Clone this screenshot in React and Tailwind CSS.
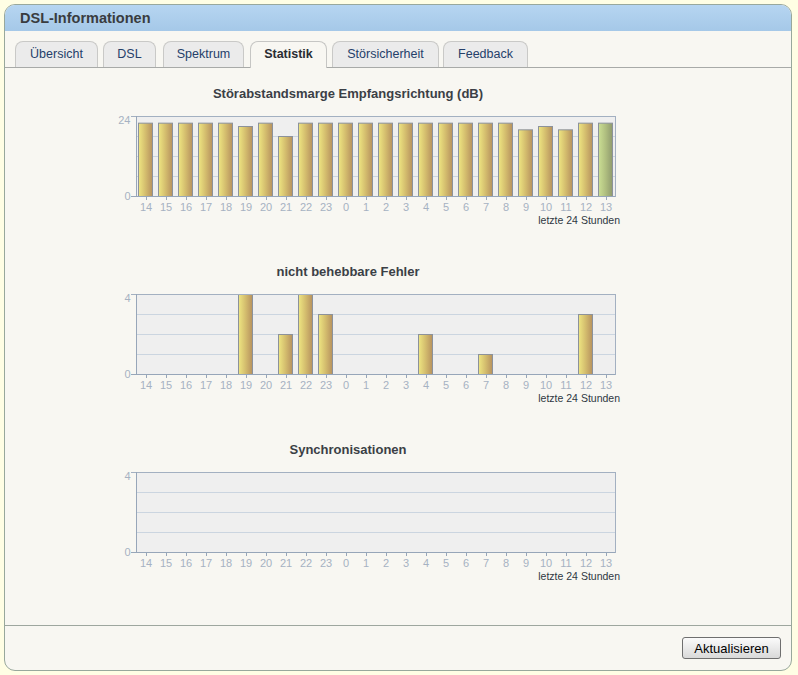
import React from "react";

const HOURS = [14, 15, 16, 17, 18, 19, 20, 21, 22, 23, 0, 1, 2, 3, 4, 5, 6, 7, 8, 9, 10, 11, 12, 13];

const TABS = [
  { label: "Übersicht", w: "w-[83px]", ml: "ml-[10px]" },
  { label: "DSL", w: "w-[53px]", ml: "ml-[5px]" },
  { label: "Spektrum", w: "w-[81px]", ml: "ml-[7px]" },
  { label: "Statistik", w: "w-[77px]", ml: "ml-[6px]", active: true },
  { label: "Störsicherheit", w: "w-[107px]", ml: "ml-[5px]" },
  { label: "Feedback", w: "w-[85px]", ml: "ml-[4px]" },
];

const FONT = "'Liberation Sans', Arial, sans-serif";

function Chart({ id, title, max, values, lastGreen }) {
  const axis = "#a3b0c1";
  const grid = "#cbd5e0";
  const label = "#a6b2c2";
  return (
    <div className="w-[540px]">
      <div className="w-[536px] h-[16px] leading-[16px] text-center text-[13px] font-bold text-[#3b3f46]">
        {title}
      </div>
      <svg width="540" height="102" className="block mt-[10px]" style={{ fontFamily: FONT }}>
        <defs>
          <linearGradient id={`y-${id}`} x1="0" x2="1" y1="0" y2="0">
            <stop offset="0" stopColor="#eee682" />
            <stop offset="0.5" stopColor="#d4bd6e" />
            <stop offset="1" stopColor="#b6915e" />
          </linearGradient>
          <linearGradient id={`g-${id}`} x1="0" x2="1" y1="0" y2="0">
            <stop offset="0" stopColor="#cbdf94" />
            <stop offset="0.5" stopColor="#b0bf80" />
            <stop offset="1" stopColor="#8f9a6e" />
          </linearGradient>
        </defs>
        <rect x="56" y="4" width="480" height="80" fill="#efefef" />
        {[1, 2, 3].map((k) => (
          <line key={k} x1="56" x2="536" y1={4 + 20 * k + 0.5} y2={4 + 20 * k + 0.5} stroke={grid} strokeWidth="1" />
        ))}
        {values.map((v, i) => {
          if (!v) return null;
          const top = 4 + 80 * (1 - v / max);
          const green = lastGreen && i === values.length - 1;
          return (
            <rect
              key={i}
              x={58.5 + 20 * i}
              y={top + 0.5}
              width="14"
              height={84 - top}
              fill={`url(#${green ? "g" : "y"}-${id})`}
              stroke="#8c929b"
              strokeWidth="1"
            />
          );
        })}
        <line x1="51" x2="536" y1="4.5" y2="4.5" stroke={axis} strokeWidth="1" />
        <line x1="51" x2="536" y1="84.5" y2="84.5" stroke="#97a6b9" strokeWidth="1" />
        <line x1="56.5" x2="56.5" y1="4" y2="85" stroke="#97a6b9" strokeWidth="1" />
        <line x1="535.5" x2="535.5" y1="4" y2="85" stroke={axis} strokeWidth="1" />
        {HOURS.map((h, i) => (
          <line key={`t${i}`} x1={66.5 + 20 * i} x2={66.5 + 20 * i} y1="85" y2="88" stroke="#97a6b9" strokeWidth="1" />
        ))}
        <text x="50.5" y="11.5" textAnchor="end" fontSize="11" fill={label}>{max}</text>
        <text x="50.5" y="87.5" textAnchor="end" fontSize="11" fill={label}>0</text>
        {HOURS.map((h, i) => (
          <text key={`l${i}`} x={66 + 20 * i} y="99" textAnchor="middle" fontSize="11" fill={label}>
            {h}
          </text>
        ))}
      </svg>
      <div className="w-[540px] h-[12px] leading-[12px] text-right text-[10.5px] text-[#2f3742]">
        letzte 24 Stunden
      </div>
    </div>
  );
}

export default function App() {
  const snr = [22, 22, 22, 22, 22, 21, 22, 18, 22, 22, 22, 22, 22, 22, 22, 22, 22, 22, 22, 20, 21, 20, 22, 22];
  const fehler = [0, 0, 0, 0, 0, 4, 0, 2, 4, 3, 0, 0, 0, 0, 2, 0, 0, 1, 0, 0, 0, 0, 3, 0];
  const sync = new Array(24).fill(0);

  return (
    <div className="w-[798px] h-[675px] bg-[#fffee4] pt-[4px] pl-[4px]" style={{ fontFamily: FONT }}>
      <div className="w-[788px] h-[667px] flex flex-col border border-[#98a89c] rounded-[11px] overflow-hidden bg-[#f8f7f2]">
        <div className="h-[26px] shrink-0 bg-gradient-to-b from-[#b6d5f1] to-[#a5c8e8] flex items-center pl-[15px]">
          <span className="text-[14.5px] font-bold text-[#393c40] leading-none">DSL-Informationen</span>
        </div>
        <div className="h-[37px] shrink-0 flex items-end border-b border-[#a8aaa8] pt-[10px]">
          {TABS.map((t) => (
            <div
              key={t.label}
              className={
                t.active
                  ? `${t.w} ${t.ml} h-[27px] -mb-px rounded-t-[8px] border border-b-0 border-[#c6c6c4] bg-[#f8f7f2] flex items-center justify-center pb-px text-[12.5px] font-bold text-[#2a2d33]`
                  : `${t.w} ${t.ml} h-[26px] rounded-t-[8px] border border-b-0 border-[#c9c9c7] bg-[#ebebeb] flex items-center justify-center text-[12.5px] text-[#25406a]`
              }
            >
              {t.label}
            </div>
          ))}
        </div>
        <div className="h-[557px] shrink-0 pt-[18px] pl-[75px] flex flex-col gap-[38px]">
          <Chart id="a" title="Störabstandsmarge Empfangsrichtung (dB)" max={24} values={snr} lastGreen />
          <Chart id="b" title="nicht behebbare Fehler" max={4} values={fehler} />
          <Chart id="c" title="Synchronisationen" max={4} values={sync} />
        </div>
        <div className="flex-1 border-t border-[#9ea79f] flex justify-end items-start pt-[11px] pr-[10px]">
          <button className="w-[99px] h-[22px] rounded-[3px] border border-[#6f6f6f] bg-gradient-to-b from-[#fbfbfb] to-[#d9d9d9] text-[13px] text-black leading-none">
            Aktualisieren
          </button>
        </div>
      </div>
    </div>
  );
}
